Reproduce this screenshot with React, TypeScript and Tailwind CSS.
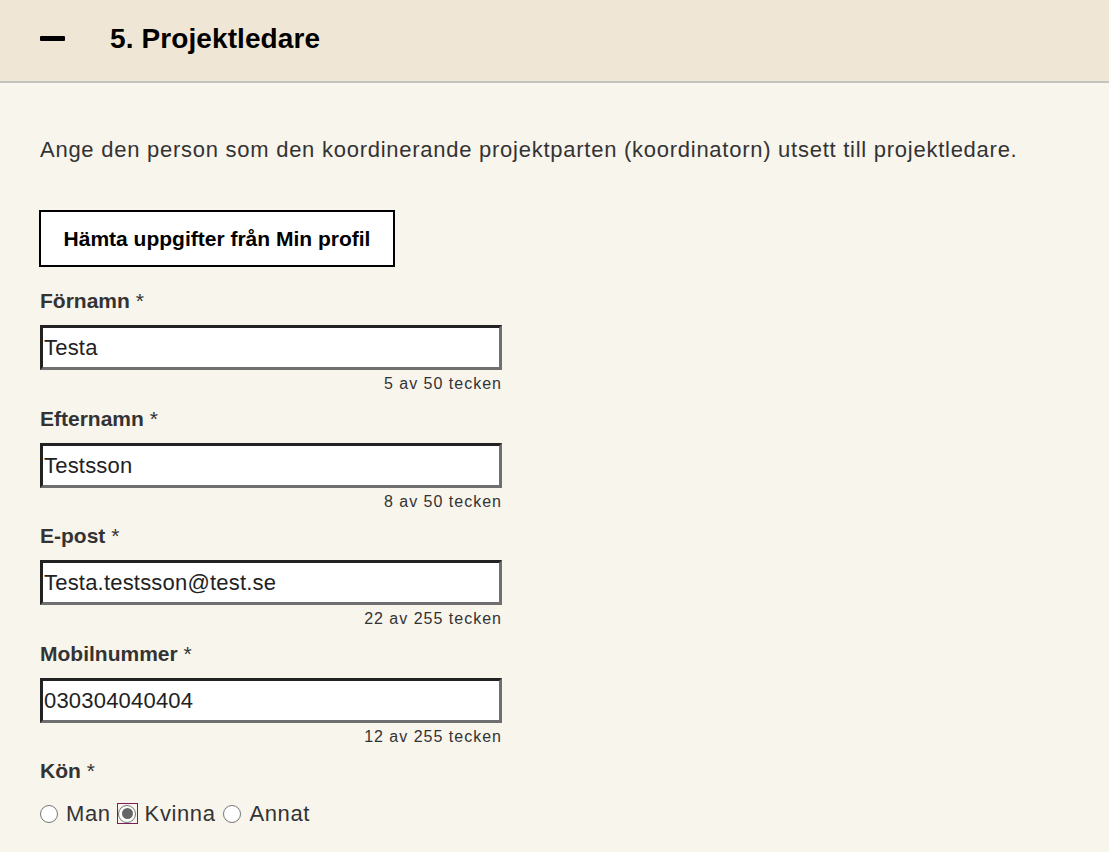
import React from "react";

const cond = { fontFamily: '"Liberation Sans", Arial, sans-serif' };
const body = { fontFamily: '"Liberation Sans", Arial, sans-serif' };

function Field({ label, value, counter }: { label: string; value: string; counter: string }) {
  return (
    <div className="flex flex-col w-[462px]">
      <div className="text-[21px] font-bold text-[#333] leading-[26px] h-[26px]" style={cond}>
        {label} <span className="font-normal">*</span>
      </div>
      <div className="mt-[11px] h-[45px] bg-white border-[3px] border-t-[#222] border-l-[#222] border-b-[#6f6f6f] border-r-[#6f6f6f] flex items-center pl-[1px]">
        <span className="text-[22px] text-[#222] tracking-[0.2px]" style={body}>{value}</span>
      </div>
      <div className="text-right text-[16px] text-[#333] leading-[18px] mt-[5px] tracking-[1px]" style={body}>
        {counter}
      </div>
    </div>
  );
}

function Radio({ checked, label, focus }: { checked?: boolean; label: string; focus?: boolean }) {
  return (
    <div className="flex items-center">
      <span className={`flex items-center justify-center w-[21px] h-[21px] ${focus ? "border border-[#7b1e5c]" : "border border-transparent"}`}>
        <span className="w-[18px] h-[18px] rounded-full border border-[#767676] bg-white flex items-center justify-center">
          {checked && <span className="w-[11px] h-[11px] rounded-full bg-[#666]" />}
        </span>
      </span>
      <span className="ml-[7px] mr-[6px] text-[22px] text-[#333] tracking-[0.6px]" style={body}>{label}</span>
    </div>
  );
}

export default function App() {
  return (
    <div className="min-h-[852px] w-full bg-[#f8f5ed]">
      <div className="h-[83px] bg-[#f0e6d5] border-b-2 border-[#c4c2bd] flex items-center">
        <div className="ml-[40px] w-[25px] h-[5px] bg-black rounded-[1px] -mt-[4px]" />
        <h2 className="ml-[45px] -mt-[4px] text-[28px] font-bold text-black tracking-[0.1px]" style={cond}>
          5. Projektledare
        </h2>
      </div>
      <div className="pl-[40px] pt-[52px]">
        <p className="text-[22px] text-[#333] tracking-[0.74px] leading-[30px]" style={body}>
          Ange den person som den koordinerande projektparten (koordinatorn) utsett till projektledare.
        </p>
        <button className="mt-[45px] -ml-[1px] w-[356px] h-[57px] border-2 border-black bg-white text-[21px] font-bold text-black" style={cond}>
          Hämta uppgifter från Min profil
        </button>
        <div className="mt-[21px] flex flex-col gap-[12.5px]">
          <Field label="Förnamn" value="Testa" counter="5 av 50 tecken" />
          <Field label="Efternamn" value="Testsson" counter="8 av 50 tecken" />
          <Field label="E-post" value="Testa.testsson@test.se" counter="22 av 255 tecken" />
          <Field label="Mobilnummer" value="030304040404" counter="12 av 255 tecken" />
          <div className="flex flex-col">
            <div className="text-[21px] font-bold text-[#333] leading-[26px] h-[26px]" style={cond}>
              Kön <span className="font-normal">*</span>
            </div>
            <div className="mt-[13px] flex items-center -ml-[2px]">
              <Radio label="Man" />
              <Radio label="Kvinna" checked focus />
              <Radio label="Annat" />
            </div>
          </div>
        </div>
      </div>
    </div>
  );
}
